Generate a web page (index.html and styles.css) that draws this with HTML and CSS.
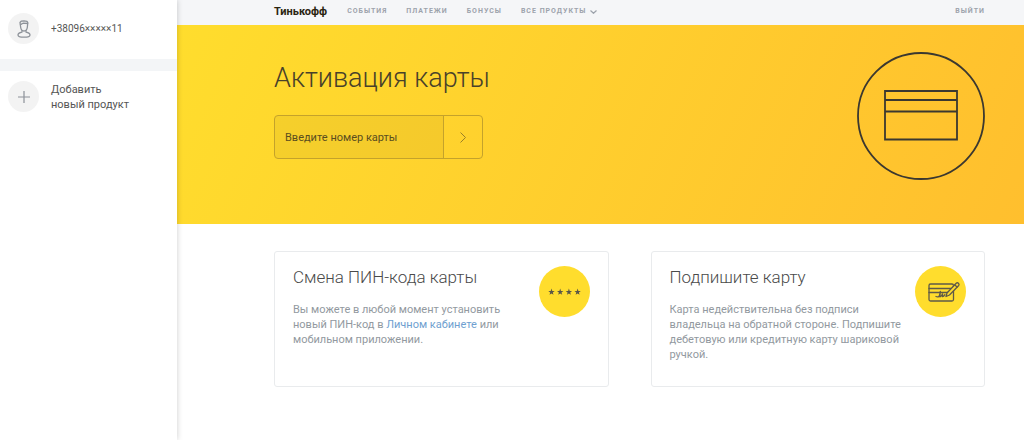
FILE: index.html
```html
<!DOCTYPE html>
<html lang="ru">
<head>
<meta charset="utf-8">
<meta name="viewport" content="width=device-width, initial-scale=1">
<title>Активация карты</title>
<link rel="stylesheet" href="styles.css">
</head>
<body>
<div class="app">
  <aside class="sidebar">
    <a class="side-item side-profile" href="#profile">
      <span class="side-icon">
        <svg width="14" height="18" viewBox="0 0 14 18" fill="none" stroke="#8d9299" stroke-width="1.3" stroke-linecap="round" stroke-linejoin="round" aria-hidden="true">
          <path d="M3 2.500 4.200 1.200 7 .8l3 .6.8 1.300-.5 4.800C10 9.600 8.600 11 7 11S4 9.600 3.700 7.500z"/>
          <path d="M3.500 4.600 6 3.200l4.600.3"/>
          <path d="M5 10.500v1.600C3 12.500 1 13.500 1 15c0 1.400 2.600 2.200 6 2.200s6-.8 6-2.200c0-1.500-2-2.500-4-2.900v-1.600"/>
        </svg>
      </span>
      <span class="side-phone">+38096×××××11</span>
    </a>
    <a class="side-item side-add" href="#add">
      <span class="side-icon">
        <svg width="12" height="12" viewBox="0 0 12 12" fill="none" stroke="#8d9299" stroke-width="1.2" aria-hidden="true"><path d="M6 0v12M0 6h12"/></svg>
      </span>
      <span class="side-label">Добавить<br>новый продукт</span>
    </a>
  </aside>
  <div class="main">
    <header class="topbar">
      <a class="brand" href="#home">Тинькофф</a>
      <nav class="nav">
        <a href="#events">События</a>
        <a href="#payments">Платежи</a>
        <a href="#bonuses">Бонусы</a>
        <a class="nav-more" href="#products">Все продукты
          <svg width="7" height="4" viewBox="0 0 7 4" fill="none" stroke="currentColor" stroke-width="1.2" aria-hidden="true"><path d="M.5.5l3 2.800 3-2.800"/></svg>
        </a>
      </nav>
      <a class="logout" href="#logout">Выйти</a>
    </header>
    <section class="hero">
      <div class="hero-body">
        <h1 class="hero-title">Активация карты</h1>
        <form class="activation">
          <input class="activation-input" type="text" placeholder="Введите номер карты" aria-label="Введите номер карты">
          <button class="activation-button" type="button" aria-label="Далее">
            <svg width="6" height="11" viewBox="0 0 6 11" fill="none" stroke="currentColor" aria-hidden="true"><path d="M.5.5l5 5-5 5"/></svg>
          </button>
        </form>
      </div>
      <svg class="hero-art" width="128" height="128" viewBox="0 0 128 128" fill="none" stroke="#3b3830" stroke-width="1.800" aria-hidden="true">
        <circle cx="64" cy="64" r="63"/>
        <path d="M28 39h72v48.500H28zM28 48h72M28 59.500h72"/>
      </svg>
    </section>
    <main class="cards">
      <article class="card">
        <div class="card-body">
          <h2 class="card-title">Смена ПИН-кода карты</h2>
          <p class="card-text">Вы можете в любой момент установить новый ПИН-код в <a class="link" href="#cabinet">Личном кабинете</a> или мобильном приложении.</p>
        </div>
        <svg class="card-icon" width="51" height="51" viewBox="0 0 51 51" aria-hidden="true">
          <defs><path id="star" d="M0-3.400.8-1.100 3.200-1 1.300.4 2 2.800 0 1.400-2 2.800-1.300.4-3.200-1-.8-1.100z" fill="#5a5647"/></defs>
          <circle cx="25.500" cy="25.500" r="25.500" fill="#ffdd2d"/>
          <use href="#star" x="12.500" y="26"/><use href="#star" x="21.200" y="26"/><use href="#star" x="29.900" y="26"/><use href="#star" x="38.600" y="26"/>
        </svg>
      </article>
      <article class="card">
        <div class="card-body">
          <h2 class="card-title">Подпишите карту</h2>
          <p class="card-text">Карта недействительна без подписи владельца на обратной стороне. Подпишите дебетовую или кредитную карту шариковой ручкой.</p>
        </div>
        <svg class="card-icon" width="51" height="51" viewBox="0 0 51 51" fill="none" stroke="#5f5a48" stroke-width="1.300" stroke-linecap="round" stroke-linejoin="round" aria-hidden="true">
          <circle cx="25.500" cy="25.500" r="25.500" fill="#ffdd2d" stroke="none"/>
          <rect x="14" y="18" width="24.500" height="17" rx="1.500"/>
          <path d="M14 22.500h22M14 26.500h19"/>
          <path d="M21 30.500c1.500.8 3.200.4 3.500-1l.8-4.200-.4 5.400c1 .4 2-1.800 2.600-2.800v2.800c1.200 0 1.800-1 2.400-2"/>
          <path d="M31 30.500 32 27l9.200-9.800c1.400-1.300 3.700.8 2.500 2.300L34.500 29z" fill="#ffdd2d"/>
          <path d="M39.800 19l2.300 2.100"/>
        </svg>
      </article>
    </main>
  </div>
</div>
</body>
</html>
```
FILE: styles.css
```css
* { box-sizing: border-box; }
body {
  margin: 0;
  background: #fff;
  color: #555;
  font-family: Roboto, "Liberation Sans", Arial, sans-serif;
  font-size: 11px;
  line-height: 15px;
}
a { color: inherit; text-decoration: none; }
h1, h2, p { margin: 0; }

.app { display: flex; min-height: 100vh; }

.sidebar {
  position: relative;
  z-index: 1;
  flex: none;
  width: 177px;
  background: #fff;
  box-shadow: 0 0 6px rgba(0, 0, 0, .2);
}
.side-item { display: flex; align-items: center; gap: 12px; padding: 10px 8px; }
.side-profile { padding: 13px 8px 15px; border-bottom: 12px solid #f3f5f7; }
.side-icon {
  display: flex;
  align-items: center;
  justify-content: center;
  width: 31px;
  height: 31px;
  border-radius: 50%;
  background: #f3f3f3;
}
.side-phone { font-size: 10px; }

.main { flex: 1; min-width: 0; }
.topbar {
  display: flex;
  align-items: center;
  height: 25px;
  padding: 0 39px 3px 97px;
  background: #f5f6f8;
}
.brand { margin-right: 20px; color: #2a2410; font-size: 11px; font-weight: 700; }
.nav { display: flex; gap: 19px; }
.nav, .logout {
  padding-top: 1px;
  color: #9da3ac;
  font-size: 7px;
  font-weight: 700;
  letter-spacing: 1px;
  text-transform: uppercase;
}
.nav-more { display: flex; align-items: center; gap: 4px; }
.logout { margin-left: auto; }

.hero {
  display: flex;
  justify-content: space-between;
  align-items: flex-start;
  padding: 27px 39px 44px 97px;
  background: linear-gradient(115deg, #ffdd2d, #ffbf2e);
}
.hero-title {
  margin: 6px 0 17px;
  color: #48412a;
  font-size: 27px;
  font-weight: 300;
  line-height: 40px;
}
.activation {
  display: flex;
  width: 209px;
  height: 44px;
  border: 1px solid #c4a22b;
  border-radius: 4px;
}
.activation-input {
  flex: 1;
  min-width: 0;
  padding: 0 10px;
  border: 0;
  border-radius: 3px 0 0 3px;
  background: rgba(0, 0, 0, .04);
  color: #5a4d1f;
  font: inherit;
}
.activation-input::placeholder { color: #5a4d1f; opacity: 1; }
.activation-button {
  display: flex;
  align-items: center;
  justify-content: center;
  width: 39px;
  padding: 0;
  border: 0;
  border-left: 1px solid #c4a22b;
  background: none;
  color: #9a7f28;
}

.cards {
  display: grid;
  grid-template-columns: 1fr 1fr;
  gap: 42px;
  padding: 27px 39px 27px 97px;
}
.card {
  display: flex;
  gap: 8px;
  min-height: 136px;
  padding: 14px 18px;
  border: 1px solid #e9ebed;
  border-radius: 3px;
}
.card-body { flex: 1; }
.card-icon { flex: none; }
.card-title {
  margin-bottom: 14px;
  color: #4a4a4a;
  font-size: 17px;
  font-weight: 300;
  line-height: 22px;
}
.card-text { color: #9299a0; }
.link { color: #6f9fd0; }
```
